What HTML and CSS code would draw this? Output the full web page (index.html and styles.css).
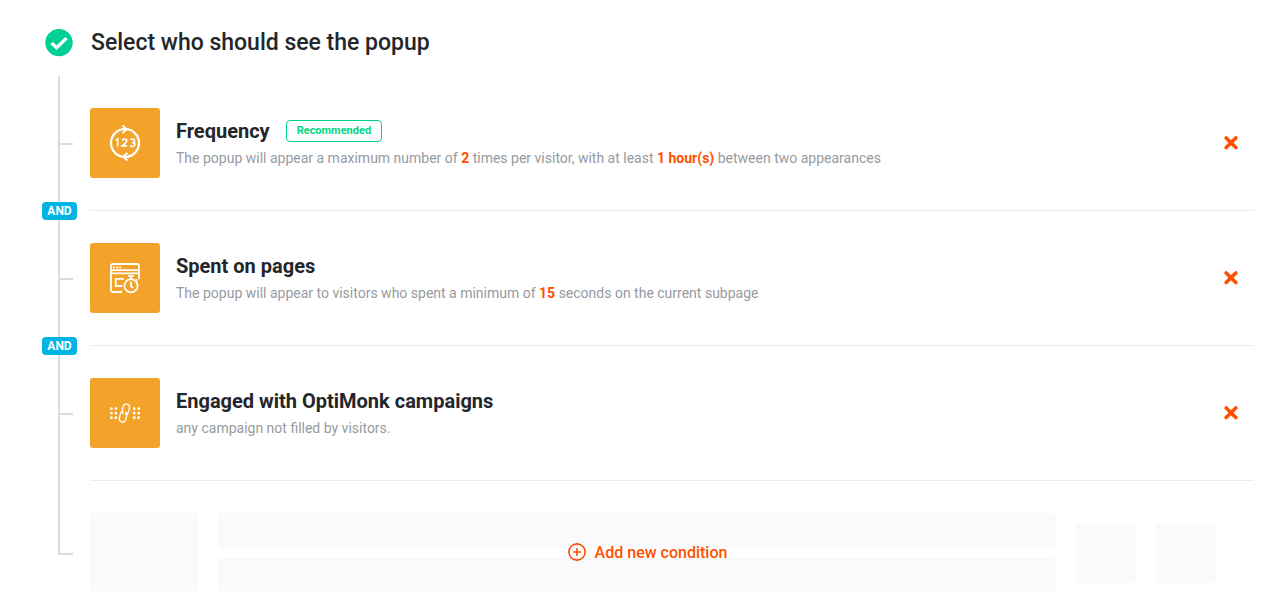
FILE: index.html
```
<!DOCTYPE html>
<html lang="en">
<head>
    <meta charset="UTF-8">
    <meta name="viewport" content="width=device-width, initial-scale=1.0">
    <title>Select who should see the popup</title>
    <link rel="stylesheet" href="styles.css">
</head>
<body>
    <main class="card">
        <header class="card-header">
            <svg class="check" viewBox="0 0 28 28" aria-hidden="true">
                <circle cx="14" cy="13.6" r="13.7" fill="#00d093"/>
                <path d="M6.6 14l5 4.7 9.9-9.6" fill="none" stroke="#fff" stroke-width="3.4"/>
            </svg>
            <h1>Select who should see the popup</h1>
        </header>

        <ul class="conditions">
            <li class="condition">
                <div class="rail"><span class="operator">AND</span></div>
                <div class="condition-body">
                    <div class="condition-icon">
                        <svg viewBox="0 0 70 70" fill="none" stroke="#fff" stroke-width="2.2" aria-hidden="true">
                            <circle cx="35" cy="35" r="14"/>
                            <path d="M32.5 17.5l4.3 3.8-4.3 3.6M37.5 45.1l-4.3 3.6 4.3 3.8" stroke-width="2"/>
                            <path d="M25.7 32.4l2-1.4v7.5M32.4 32.6c.2-2.1 4.4-2.2 4.4.2 0 1.8-3 3.4-4.5 5h4.9M40.3 31.6c1.5-1 4.3-.7 4.3 1.3 0 1.1-1 1.7-2.5 1.7 1.7 0 2.8.6 2.8 1.9 0 2.2-3.3 2.3-4.8 1.2" stroke-width="1.7"/>
                        </svg>
                    </div>
                    <div class="condition-text">
                        <div class="condition-title">
                            <h2>Frequency</h2>
                            <span class="tag">Recommended</span>
                        </div>
                        <p>The popup will appear a maximum number of <b>2</b> times per visitor, with at least <b>1 hour(s)</b> between two appearances</p>
                    </div>
                    <button class="remove" type="button" aria-label="Remove Frequency">
                        <svg viewBox="0 0 14 14" aria-hidden="true"><path d="M2.2 1.9l9.6 9.6M11.8 1.9l-9.6 9.6"/></svg>
                    </button>
                </div>
            </li>

            <li class="condition">
                <div class="rail"><span class="operator">AND</span></div>
                <div class="condition-body">
                    <div class="condition-icon">
                        <svg viewBox="0 0 70 70" fill="none" stroke="#fff" stroke-width="1.8" aria-hidden="true">
                            <path d="M32 49h-8.5a2.5 2.5 0 0 1-2.5-2.5v-23a2.5 2.5 0 0 1 2.5-2.5h23a2.5 2.5 0 0 1 2.5 2.5V36M21 27.2h28M21 30.3h28"/>
                            <path d="M23.2 24.3h1.8M26.2 24.3h1.8M29.2 24.3h1.8"/>
                            <path d="M34 35.8h-8.2v7.2h6.4"/>
                            <circle cx="41" cy="42.8" r="6.6"/>
                            <path d="M41 36v-2.6M38.3 33h5.4M41 38.8v4.2l2 2M46 37.6l1.3-1.3"/>
                        </svg>
                    </div>
                    <div class="condition-text">
                        <div class="condition-title">
                            <h2>Spent on pages</h2>
                        </div>
                        <p>The popup will appear to visitors who spent a minimum of <b>15</b> seconds on the current subpage</p>
                    </div>
                    <button class="remove" type="button" aria-label="Remove Spent on pages">
                        <svg viewBox="0 0 14 14" aria-hidden="true"><path d="M2.2 1.9l9.6 9.6M11.8 1.9l-9.6 9.6"/></svg>
                    </button>
                </div>
            </li>

            <li class="condition">
                <div class="rail"></div>
                <div class="condition-body">
                    <div class="condition-icon">
                        <svg viewBox="0 0 70 70" fill="none" stroke="#fff" aria-hidden="true">
                            <path d="M21.4 30.7h0M25.9 30.7h0M21.4 35.2h0M25.9 35.2h0M21.4 39.7h0M25.9 39.7h0M44.2 30.7h0M48.7 30.7h0M44.2 35.2h0M48.7 35.2h0M44.2 39.7h0M48.7 39.7h0" stroke-width="2.8" stroke-linecap="round"/>
                            <path d="M33.6 36.2a3.2 3.2 0 0 1-1.5-3.4l1-4.3a3.2 3.2 0 0 1 6.3 1.4l-1 4.3a3.2 3.2 0 0 1-3.3 2.5" stroke-width="1.3"/>
                            <path d="M35.2 33.9a3.2 3.2 0 0 1 1.5 3.4l-1 4.3a3.2 3.2 0 0 1-6.3-1.4l1-4.3a3.2 3.2 0 0 1 3.3-2.5" stroke-width="1.3"/>
                        </svg>
                    </div>
                    <div class="condition-text">
                        <div class="condition-title">
                            <h2>Engaged with OptiMonk campaigns</h2>
                        </div>
                        <p>any campaign not filled by visitors.</p>
                    </div>
                    <button class="remove" type="button" aria-label="Remove Engaged with OptiMonk campaigns">
                        <svg viewBox="0 0 14 14" aria-hidden="true"><path d="M2.2 1.9l9.6 9.6M11.8 1.9l-9.6 9.6"/></svg>
                    </button>
                </div>
            </li>

            <li class="condition add">
                <div class="rail"></div>
                <div class="placeholder">
                    <div class="placeholder-image"></div>
                    <div class="placeholder-lines">
                        <div class="placeholder-line"></div>
                        <div class="placeholder-line"></div>
                    </div>
                    <div class="placeholder-square"></div>
                    <div class="placeholder-square"></div>
                </div>
                <button class="add-button" type="button">
                    <svg viewBox="0 0 18 18" aria-hidden="true">
                        <circle cx="9" cy="9" r="8.1"/>
                        <path d="M9 5v8M5 9h8"/>
                    </svg>
                    Add new condition
                </button>
            </li>
        </ul>
    </main>
</body>
</html>
```

FILE: styles.css
```
* {
    box-sizing: border-box;
}

body {
    margin: 4px 1px 0 17px;
    background-color: #fff;
    color: #23262a;
    font-family: Roboto, sans-serif;
}

h1, h2, p, ul {
    margin: 0;
    padding: 0;
}

button {
    padding: 0;
    border: none;
    background: none;
    font-family: inherit;
    cursor: pointer;
}

.card {
    padding: 25px 24px 32px;
    border-radius: 4px;
    background-color: #fff;
    box-shadow: 0 4px 24px rgba(50, 70, 140, 0.09);
}

.card-header {
    display: flex;
    align-items: center;
    gap: 18px;
    height: 28px;
    padding-left: 4px;
    margin-bottom: 19px;
}

.check {
    width: 28px;
    height: 28px;
}

.card-header h1 {
    font-size: 23px;
    line-height: 28px;
    font-weight: 500;
}

.conditions {
    list-style: none;
}

.condition {
    display: flex;
    position: relative;
}

/* Vertical line with a tick for every condition */
.rail {
    position: relative;
    flex: 0 0 49px;
}

.rail::before {
    content: "";
    position: absolute;
    top: 0;
    bottom: 0;
    left: 17px;
    border-left: 2px solid #d8dde3;
}

.rail::after {
    content: "";
    position: absolute;
    top: 67px;
    left: 17px;
    width: 15px;
    border-top: 2px solid #d8dde3;
}

.operator {
    position: absolute;
    bottom: -9px;
    left: 1px;
    z-index: 1;
    width: 35px;
    border-radius: 4px;
    background-color: #00b4e3;
    color: #fff;
    font-size: 12px;
    line-height: 18px;
    font-weight: 700;
    text-align: center;
}

.condition-body {
    display: flex;
    flex: 1;
    align-items: center;
    gap: 16px;
    padding: 32px 16px 32px 0;
    border-bottom: 1px solid #ebebeb;
}

.condition-icon {
    flex: none;
    width: 70px;
    height: 70px;
    border-radius: 3px;
    background-color: #f3a32a;
}

.condition-icon svg {
    display: block;
}

.condition-text {
    flex: 1;
    padding-top: 2px;
}

.condition-title {
    display: flex;
    align-items: center;
    gap: 16px;
    margin-bottom: 4px;
}

.condition-title h2 {
    font-size: 20px;
    line-height: 24px;
    font-weight: 700;
}

.tag {
    padding: 0 10px;
    border: 1px solid #00d57f;
    border-radius: 4px;
    color: #00d57f;
    font-size: 11px;
    line-height: 20px;
    font-weight: 700;
}

.condition-text p {
    color: #969ba1;
    font-size: 14px;
    line-height: 22px;
}

.condition-text b {
    color: #ff4f00;
}

.remove svg {
    display: block;
    width: 14px;
    height: 14px;
    fill: none;
    stroke: #ff4f00;
    stroke-width: 3.6;
    stroke-linecap: round;
}

.add .rail::before {
    bottom: auto;
    height: 74px;
}

.add .rail::after {
    top: 72px;
}

.placeholder {
    display: flex;
    flex: 1;
    align-items: center;
    gap: 20px;
    padding: 32px 38px 0 0;
}

.placeholder-image,
.placeholder-line,
.placeholder-square {
    border-radius: 3px;
    background-color: #f9fafc;
}

.placeholder-image {
    width: 108px;
    height: 80px;
}

.placeholder-lines {
    display: flex;
    flex: 1;
    flex-direction: column;
    gap: 10px;
}

.placeholder-line {
    height: 35px;
}

.placeholder-square {
    width: 60px;
    height: 60px;
}

.add-button {
    position: absolute;
    top: 30px;
    right: 0;
    bottom: 0;
    left: 0;
    display: flex;
    align-items: center;
    justify-content: center;
    gap: 9px;
    color: #ff4f00;
    font-size: 16px;
    font-weight: 500;
}

.add-button svg {
    width: 18px;
    height: 18px;
    fill: none;
    stroke: #ff4f00;
    stroke-width: 1.6;
}
```
